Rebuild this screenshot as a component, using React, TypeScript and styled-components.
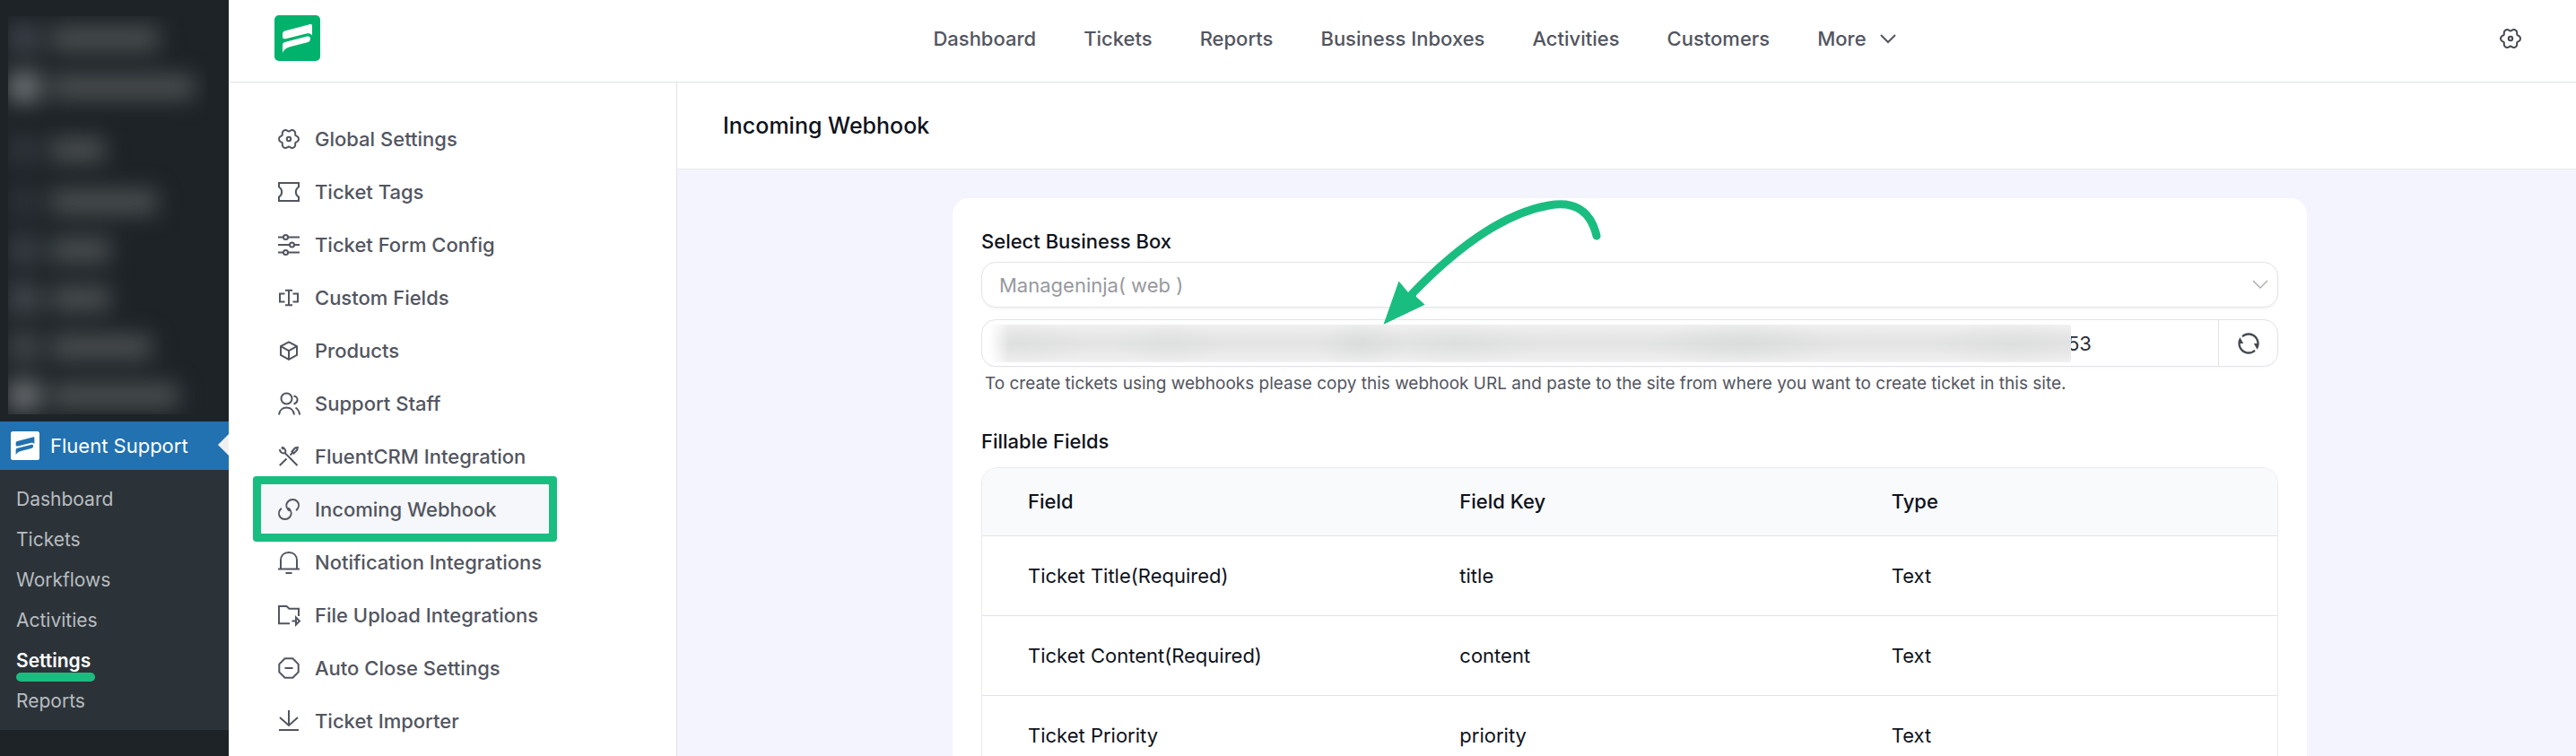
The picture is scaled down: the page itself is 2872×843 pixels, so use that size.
import React from 'react';
import styled, { createGlobalStyle, css } from 'styled-components';
import { RiRefreshLine } from 'react-icons/ri';

const color = {
  ink: '#0e121b',
  text: '#525560',
  muted: '#97999e',
  line: '#e1e3e6',
  canvas: '#f3f4fd',
  brand: '#00b26b',
  marker: '#1abd80',
  admin: '#1d2327',
  adminSub: '#2c3338',
  adminActive: '#2271b1',
};

const GlobalStyle = createGlobalStyle`
  *, *::before, *::after { box-sizing: border-box; }
  body { margin: 0; background: #fff; color: ${color.ink}; font-family: Inter, "Liberation Sans", sans-serif; font-size: 22px; line-height: 26px; }
  a { color: inherit; text-decoration: none; }
  ul { list-style: none; margin: 0; padding: 0; }
  button, input, select { font: inherit; color: inherit; background: none; border: 0; margin: 0; padding: 0; }
  h1, h2 { margin: 0; font-weight: 500; }
`;

const Shell = styled.div`
  display: flex;
  height: 100vh;
  overflow: hidden;
`;

/* ---------- admin rail ---------- */

const AdminRail = styled.nav`
  flex: 0 0 255px;
  background: ${color.admin};
`;

const HiddenMenu = styled.div`
  height: 444px;
  margin: 18px 24px 8px 9px;
  overflow: hidden;
`;

const HiddenRows = styled.div`
  display: flex;
  flex-direction: column;
  filter: blur(12px);
`;

const HiddenRow = styled.div<{ $gap: number }>`
  display: flex;
  align-items: center;
  gap: 12px;
  height: 34px;
  margin-top: ${(p) => p.$gap}px;
`;

const HiddenIcon = styled.span<{ $tone: string }>`
  width: 36px;
  height: 34px;
  background: ${(p) => p.$tone};
`;

const HiddenLabel = styled.span<{ $width: number }>`
  width: ${(p) => p.$width}px;
  height: 28px;
  background: #4a4e50;
`;

const ActiveProduct = styled.a`
  position: relative;
  display: flex;
  align-items: center;
  gap: 12px;
  height: 54px;
  padding-left: 12px;
  background: ${color.adminActive};
  color: #fff;

  &::after {
    content: '';
    position: absolute;
    right: 0;
    top: 14px;
    border: 12px solid transparent;
    border-left: 0;
    border-right-color: #f0f0f1;
  }
`;

const SubMenu = styled.ul`
  padding: 10px 0;
  background: ${color.adminSub};
  font-size: 21px;
`;

const SubItem = styled.li<{ $active?: boolean }>`
  display: flex;
  align-items: center;
  height: 45px;
  padding-left: 18px;
  color: #b8bdc1;

  ${(p) =>
    p.$active &&
    css`
      position: relative;
      color: #fff;
      font-weight: 600;

      &::after {
        content: '';
        position: absolute;
        left: 18px;
        bottom: -1px;
        width: 88px;
        height: 10px;
        border-radius: 5px;
        background: ${color.marker};
      }
    `}
`;

/* ---------- top bar ---------- */

const Page = styled.div`
  flex: 1;
  min-width: 0;
  display: flex;
  flex-direction: column;
`;

const TopBar = styled.header`
  display: flex;
  align-items: center;
  justify-content: space-between;
  flex: 0 0 92px;
  padding: 0 51px 6px;
  border-bottom: 1px solid ${color.line};
`;

const TopNav = styled.nav`
  display: flex;
  align-items: center;
  gap: 53px;
  margin-left: 20px;
  color: ${color.text};
  font-weight: 500;
`;

const MoreButton = styled.button`
  display: flex;
  align-items: center;
  gap: 15px;
  padding-top: 1px;
  font-weight: 500;
`;

const IconButton = styled.button`
  display: flex;
  align-items: center;
  justify-content: center;
  width: 44px;
  height: 44px;
  color: #45484f;
`;

/* ---------- settings menu ---------- */

const Body = styled.div`
  flex: 1;
  min-height: 0;
  display: flex;
`;

const SettingsNav = styled.nav`
  flex: 0 0 500px;
  padding: 35px 142px 0 36px;
  border-right: 1px solid ${color.line};
`;

const SettingsList = styled.ul`
  display: flex;
  flex-direction: column;
  gap: 4px;
`;

const SettingsLink = styled.a<{ $active?: boolean }>`
  display: flex;
  align-items: center;
  gap: 17px;
  height: 55px;
  padding-left: 19px;
  color: ${color.text};
  font-weight: 500;
  white-space: nowrap;

  ${(p) =>
    p.$active &&
    css`
      background: #f5f7fa;
      border-radius: 1px;
      box-shadow: 0 0 0 9px ${color.marker};
    `}
`;

/* ---------- content ---------- */

const Main = styled.main`
  flex: 1;
  min-width: 0;
  display: flex;
  flex-direction: column;
  background: ${color.canvas};
`;

const PageHead = styled.div`
  display: flex;
  align-items: center;
  flex: 0 0 97px;
  padding: 0 51px;
  background: #fff;
  border-bottom: 1px solid #e9eaee;
`;

const PageTitle = styled.h1`
  font-size: 25px;
  line-height: 30px;
`;

const Scroller = styled.div`
  flex: 1;
  min-height: 0;
  overflow: hidden;
  padding: 32px 25px 32px 32px;
`;

const Card = styled.section`
  position: relative;
  max-width: 1510px;
  margin: 0 auto;
  padding: 35px 32px;
  background: #fff;
  border-radius: 18px;
`;

const FieldLabel = styled.label`
  display: block;
  margin-bottom: 10px;
  font-weight: 500;
`;

const SelectBox = styled.div`
  display: flex;
  align-items: center;
  height: 51px;
  margin-bottom: 13px;
  padding-right: 10px;
  border: 1px solid ${color.line};
  border-radius: 16px;
  box-shadow: 0 2px 3px #0000000a;
  color: #a9abb0;
`;

const Select = styled.select`
  flex: 1;
  height: 100%;
  padding-left: 19px;
  appearance: none;
  outline: 0;
  color: ${color.muted};
`;

const UrlBox = styled.div`
  display: flex;
  align-items: center;
  height: 53px;
  border: 1px solid ${color.line};
  border-radius: 16px;
  box-shadow: 0 1px 2px #00000008;
`;

const Redaction = styled.div`
  position: relative;
  flex: 0 1 1206px;
  height: 42px;
  margin-left: 8px;
  border-radius: 2px;
  background:
    radial-gradient(50px 26px at 415px 21px, #d2d5d588, transparent),
    radial-gradient(90px 24px at 525px 21px, #d6d9d977, transparent),
    radial-gradient(110px 26px at 840px 21px, #d2d5d588, transparent),
    radial-gradient(60px 24px at 200px 21px, #d8dada77, transparent),
    radial-gradient(90px 24px at 1140px 21px, #d6d8d877, transparent),
    radial-gradient(70px 24px at 40px 21px, #d8dada77, transparent),
    linear-gradient(#f0f0f0, #e6e6e6 35%, #e3e4e4 50%, #e7e7e7 65%, #f0f0f0);
  mask-image: linear-gradient(90deg, transparent, #000 22px);
`;

const UrlInput = styled.input`
  flex: 1;
  min-width: 0;
  height: 100%;
  margin-left: -4px;
  outline: 0;
  color: #2b2e35;
`;

const RefreshButton = styled.button`
  display: flex;
  align-items: center;
  justify-content: center;
  width: 66px;
  height: 100%;
  border-left: 1px solid ${color.line};
  color: #45484f;
`;

const Help = styled.p`
  margin: 7px 4px 39px;
  color: ${color.text};
  font-size: 19px;
  line-height: 24px;
`;

const SectionTitle = styled.h2`
  margin-bottom: 16px;
  font-size: 22px;
`;

const TableFrame = styled.div`
  overflow: hidden;
  border: 1px solid #e8eaed;
  border-radius: 18px;
`;

const Table = styled.table`
  width: 100%;
  table-layout: fixed;
  border-collapse: collapse;
  text-align: left;
`;

const HeadCell = styled.th`
  height: 75px;
  padding: 0 0 0 51px;
  background: #f9fafc;
  border-bottom: 1px solid ${color.line};
  font-weight: 500;
`;

const Cell = styled.td`
  height: 89px;
  padding: 0 0 0 51px;
  border-bottom: 1px solid ${color.line};
`;

const Pointer = styled.svg`
  position: absolute;
  left: 479px;
  top: 0;
  pointer-events: none;
`;

/* ---------- drawings ---------- */

const Svg = styled.svg.attrs({ viewBox: '0 0 24 24', 'aria-hidden': true })`
  width: 24px;
  height: 24px;
  flex: none;
  overflow: visible;
  fill: none;
  stroke: currentColor;
  stroke-width: 2;
`;

const gearPath =
  Array.from({ length: 90 }, (_, i) => {
    const a = (i * 4 * Math.PI) / 180;
    const r = 9.9 + 1.2 * Math.cos(6 * a) - 0.2 * Math.cos(12 * a);
    return `${i ? 'L' : 'M'}${(12 + r * Math.cos(a)).toFixed(2)} ${(12 + r * Math.sin(a)).toFixed(2)}`;
  }).join('') + 'Z';

const Gear = () => (
  <Svg>
    <path d={gearPath} />
    <circle cx="12" cy="12" r="2.2" />
  </Svg>
);

const Mark = ({ size, bg, fg, round }: { size: [number, number]; bg: string; fg: string; round: number }) => (
  <svg width={size[0]} height={size[1]} viewBox="0 0 51 51" preserveAspectRatio="none" aria-hidden="true">
    <rect width="51" height="51" rx={round} fill={bg} />
    <path
      fill={fg}
      d="M9 20.5C9 19 10 18 11.500 17.500L39 10.300C41 9.800 42 10.300 42 12V22.500C40.500 20.500 39 19.800 36.500 20.300L12.500 26.200C10.300 26.700 9 26 9 24ZM9 33C9 31.500 10 30.500 11.500 30L35.500 23.800C38.500 23 40 24 40 26C40 28.500 39 29.700 36.500 30.300L18 35C13 36.300 10.500 38.500 9 42Z"
    />
  </svg>
);

const icons: Record<string, React.ReactNode> = {
  gear: <Gear />,
  ticket: (
    <Svg>
      <path d="M1 2H23V6.500C20.500 8 19.800 9.800 19.800 12C19.800 14.200 20.500 16 23 17.500V22H1V17.500C3.500 16 4.200 14.200 4.200 12C4.200 9.800 3.500 8 1 6.500Z" />
    </Svg>
  ),
  sliders: (
    <Svg>
      <path d="M0 3.500H6M11 3.500H24M0 12H13M18 12H24M0 20.500H6M11 20.500H24" />
      <circle cx="8.5" cy="3.500" r="2.500" />
      <circle cx="15.5" cy="12" r="2.500" />
      <circle cx="8.5" cy="20.500" r="2.500" />
    </Svg>
  ),
  field: (
    <Svg>
      <path d="M8 3.800H16M8 20.200H16M12 3.800V20.200M7.500 7.500H2V16.500H7.500M16.500 7.500H22V16.500H16.500" />
    </Svg>
  ),
  box: (
    <Svg>
      <path d="M12 2.300L21 7.200V17L12 21.800L3 17V7.200ZM3 7.200L12 12.200L21 7.200M12 12.200V21.800" />
    </Svg>
  ),
  staff: (
    <Svg>
      <circle cx="9.500" cy="6.500" r="6" />
      <path d="M1 24.500C1.500 19.500 5 16.500 9.500 16.500C14 16.500 17.500 19.500 18 24.500M17.500 3.500C20.500 4 22 6 21.500 8.500C21 11 19.500 12 17.500 12.500M19.500 16.500C22 18 23.500 20.500 24.200 24.500" />
    </Svg>
  ),
  tools: (
    <Svg>
      <path d="M7.800 8.200L21.500 22M1.800 4C2.300 7.500 5 9.200 8 8C9 5 7.300 2.300 4 1.800M4 1.800L6 4M1.800 22L9.500 14.500M13.500 10.500L16.500 7.500M15.500 6.500L19 2.500L21.800 2L21.300 4.800L17.500 8.500Z" />
    </Svg>
  ),
  link: (
    <Svg>
      <path d="M3.800 10.800C.4 14 .2 18.200 2.700 21C5.500 23.900 10 23.700 12.700 21C15.300 18.300 15.300 14.500 12.700 11.800L11.300 10.400M20.200 13.200C23.600 10 23.800 5.800 21.300 3C18.500.1 14 .3 11.300 3C8.700 5.700 8.700 9.500 11.300 12.200L12.700 13.600" />
    </Svg>
  ),
  bell: (
    <Svg>
      <path d="M0 19.500H24M3 19.500V10C3 4.500 6.500 1 12 1C17.500 1 21 4.500 21 10V19.500M8.500 24H15.500" />
    </Svg>
  ),
  folder: (
    <Svg>
      <path d="M13 21.200H1V2H9.500L12.500 4.800H23V13M15.500 18.500H20M20 14.500V22.500L24 18.500Z" />
    </Svg>
  ),
  stop: (
    <Svg>
      <path d="M7.600 1.300H16.400L22.700 7.600V16.400L16.400 22.700H7.600L1.300 16.400V7.600ZM7.500 12H16.500" />
    </Svg>
  ),
  download: (
    <Svg>
      <path d="M12 0V16M2 8L12 17L22 8M1 22H23" />
    </Svg>
  ),
};

const Chevron = ({ thin }: { thin?: boolean }) => (
  <svg width="18" height="11" viewBox="0 0 18 11" fill="none" stroke="currentColor" strokeWidth={thin ? 1.4 : 2} aria-hidden="true">
    <path d="M1 1L9 9L17 1" />
  </svg>
);

/* ---------- data ---------- */

const hiddenRows = [
  { gap: 8, tone: '#3b4048', width: 120 },
  { gap: 20, tone: '#6c7073', width: 160 },
  { gap: 36, tone: '#2f343b', width: 60 },
  { gap: 24, tone: '#2c3138', width: 118 },
  { gap: 20, tone: '#373d44', width: 66 },
  { gap: 20, tone: '#41464c', width: 66 },
  { gap: 20, tone: '#3e4347', width: 112 },
  { gap: 20, tone: '#6a6d70', width: 142 },
];

const subMenu = ['Dashboard', 'Tickets', 'Workflows', 'Activities', 'Settings', 'Reports'];

const topMenu = ['Dashboard', 'Tickets', 'Reports', 'Business Inboxes', 'Activities', 'Customers'];

const settings = [
  ['gear', 'Global Settings'],
  ['ticket', 'Ticket Tags'],
  ['sliders', 'Ticket Form Config'],
  ['field', 'Custom Fields'],
  ['box', 'Products'],
  ['staff', 'Support Staff'],
  ['tools', 'FluentCRM Integration'],
  ['link', 'Incoming Webhook'],
  ['bell', 'Notification Integrations'],
  ['folder', 'File Upload Integrations'],
  ['stop', 'Auto Close Settings'],
  ['download', 'Ticket Importer'],
];

const fields = [
  ['Ticket Title(Required)', 'title', 'Text'],
  ['Ticket Content(Required)', 'content', 'Text'],
  ['Ticket Priority', 'priority', 'Text'],
];

export default function App() {
  return (
    <Shell>
      <GlobalStyle />
      <AdminRail>
        <HiddenMenu aria-hidden="true">
          <HiddenRows>
            {hiddenRows.map((row, i) => (
              <HiddenRow key={i} $gap={row.gap}>
                <HiddenIcon $tone={row.tone} />
                <HiddenLabel $width={row.width} />
              </HiddenRow>
            ))}
          </HiddenRows>
        </HiddenMenu>
        <ActiveProduct href="#">
          <Mark size={[32, 32]} bg="#fff" fg={color.adminActive} round={4} />
          Fluent Support
        </ActiveProduct>
        <SubMenu>
          {subMenu.map((name) => (
            <SubItem key={name} $active={name === 'Settings'}>
              <a href="#">{name}</a>
            </SubItem>
          ))}
        </SubMenu>
      </AdminRail>

      <Page>
        <TopBar>
          <Mark size={[51, 51]} bg={color.brand} fg="#fff" round={5} />
          <TopNav>
            {topMenu.map((name) => (
              <a href="#" key={name}>
                {name}
              </a>
            ))}
            <MoreButton type="button">
              More <Chevron />
            </MoreButton>
          </TopNav>
          <IconButton type="button" aria-label="Settings">
            <Gear />
          </IconButton>
        </TopBar>

        <Body>
          <SettingsNav>
            <SettingsList>
              {settings.map(([icon, name]) => (
                <li key={name}>
                  <SettingsLink href="#" $active={name === 'Incoming Webhook'}>
                    {icons[icon]}
                    {name}
                  </SettingsLink>
                </li>
              ))}
            </SettingsList>
          </SettingsNav>

          <Main>
            <PageHead>
              <PageTitle>Incoming Webhook</PageTitle>
            </PageHead>
            <Scroller>
              <Card>
                <FieldLabel htmlFor="box">Select Business Box</FieldLabel>
                <SelectBox>
                  <Select id="box">
                    <option>Manageninja( web )</option>
                  </Select>
                  <Chevron thin />
                </SelectBox>
                <UrlBox>
                  <Redaction />
                  <UrlInput aria-label="Webhook URL" readOnly value="53" />
                  <RefreshButton type="button" aria-label="Regenerate URL">
                    <RiRefreshLine size={28} />
                  </RefreshButton>
                </UrlBox>
                <Help>
                  To create tickets using webhooks please copy this webhook URL and paste to the site from where you want to create ticket in this site.
                </Help>
                <SectionTitle>Fillable Fields</SectionTitle>
                <TableFrame>
                  <Table>
                    <thead>
                      <tr>
                        <HeadCell>Field</HeadCell>
                        <HeadCell>Field Key</HeadCell>
                        <HeadCell>Type</HeadCell>
                      </tr>
                    </thead>
                    <tbody>
                      {fields.map((row) => (
                        <tr key={row[1]}>
                          {row.map((value) => (
                            <Cell key={value}>{value}</Cell>
                          ))}
                        </tr>
                      ))}
                    </tbody>
                  </Table>
                </TableFrame>
                <Pointer width="246" height="144" viewBox="0 0 246 144" fill="none" aria-hidden="true">
                  <path d="M239 42C232 12 212 3 186 8C140 16 88 50 33 107" stroke={color.marker} strokeWidth="9" strokeLinecap="round" />
                  <path d="M1.500 140.700L18.500 92.500L29 105L37 103L38 110L47.600 118.700Z" fill={color.marker} />
                </Pointer>
              </Card>
            </Scroller>
          </Main>
        </Body>
      </Page>
    </Shell>
  );
}
